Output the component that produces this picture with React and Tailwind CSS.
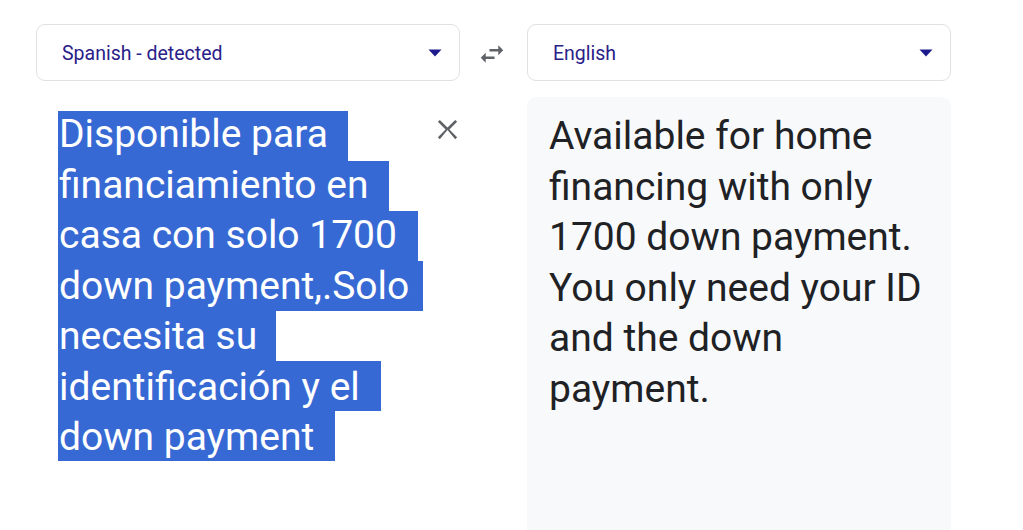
import React from "react";

const leftLines = [
  { t: "Disponible para", w: "w-[290px]" },
  { t: "financiamiento en", w: "w-[331px]" },
  { t: "casa con solo 1700", w: "w-[360px]" },
  { t: "down payment,.Solo", w: "w-[365px]" },
  { t: "necesita su", w: "w-[218px]" },
  { t: "identificación y el", w: "w-[323px]" },
  { t: "down payment", w: "w-[277px]" },
];

const rightLines = [
  "Available for home",
  "financing with only",
  "1700 down payment.",
  "You only need your ID",
  "and the down",
  "payment.",
];

function Caret() {
  return (
    <svg width="14" height="8" viewBox="0 0 14 8" className="shrink-0">
      <path d="M0.5 0.5 L13.5 0.5 L7 7.5 Z" fill="#1c1a8c" />
    </svg>
  );
}

function LangBox({ label }) {
  return (
    <div className="flex h-[57px] items-center justify-between rounded-[9px] border border-[#dfe1e5] bg-white pl-[25px] pr-[17px]">
      <span className="pt-[2px] text-[19.5px] text-[#2a2089]">{label}</span>
      <Caret />
    </div>
  );
}

export default function App() {
  return (
    <div
      className="h-[530px] w-[1023px] overflow-hidden bg-white"
      style={{ fontFamily: "Roboto, 'Noto Sans', sans-serif" }}
    >
      <div className="grid grid-cols-[424px_67px_424px] pl-[36px] pt-[24px]">
        <LangBox label="Spanish - detected" />
        <div className="flex items-center justify-center pr-[3px] pt-[2px]">
          <svg width="30" height="30" viewBox="0 0 24 24">
            <path
              d="M6.99 11L3 15l3.99 4v-3H14v-2H6.99v-3zM21 9l-3.99-4v3H10v2h7.01v3L21 9z"
              fill="#5f6368"
            />
          </svg>
        </div>
        <LangBox label="English" />

        <div className="mt-[16px] flex">
          <div className="flex-1 pl-[22px] pt-[14px] text-[39px] leading-[50px] text-white">
            {leftLines.map((l, i) => (
              <div key={l.t} className={`h-[50px] whitespace-nowrap bg-[#3769d4] pl-[1px] ${l.w}`}>
                <span className="relative" style={{ top: -2 + i * 0.5 }}>
                  {l.t}
                </span>
              </div>
            ))}
          </div>
          <div className="mr-[-4px] mt-[16px] h-[33px] w-[33px] shrink-0">
            <svg width="33" height="33" viewBox="0 0 24 24">
              <path
                d="M19 6.41L17.59 5 12 10.59 6.41 5 5 6.41 10.59 12 5 17.59 6.41 19 12 12.41 17.59 19 19 17.59 13.41 12z"
                fill="#5f6368"
              />
            </svg>
          </div>
        </div>
        <div />
        <div className="mt-[16px] h-[440px] rounded-t-[9px] bg-[#f8f9fa] pl-[22px] pt-[14px] text-[39px] leading-[50.5px] text-[#202124]">
          {rightLines.map((l) => (
            <div key={l} className="whitespace-nowrap">
              {l}
            </div>
          ))}
        </div>
      </div>
    </div>
  );
}
